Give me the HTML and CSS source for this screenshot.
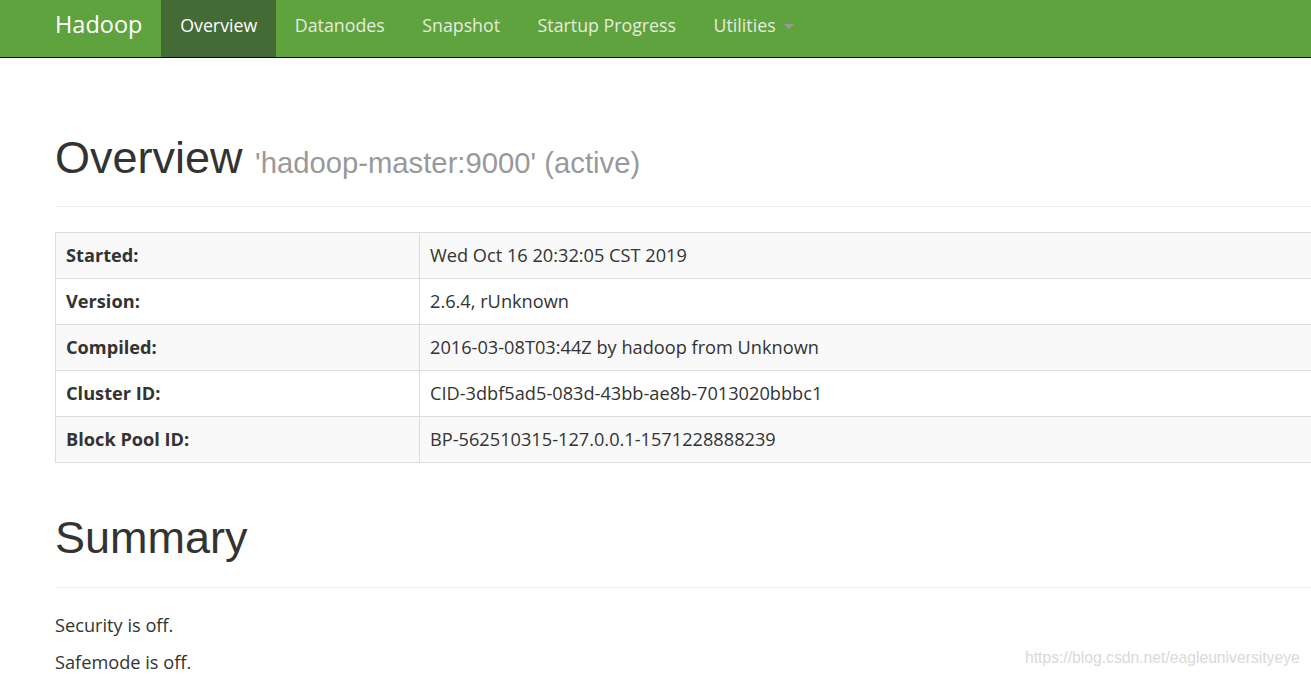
FILE: index.html
```html
<!DOCTYPE html>
<html>
<head>
<meta charset="utf-8">
<title>Namenode information</title>
<link rel="stylesheet" href="styles.css">
</head>
<body>
<header class="navbar">
  <div class="navbar-inner">
    <a class="brand">Hadoop</a>
    <ul class="nav">
      <li class="active"><a>Overview</a></li>
      <li><a>Datanodes</a></li>
      <li><a>Snapshot</a></li>
      <li><a>Startup Progress</a></li>
      <li><a>Utilities <span class="caret"></span></a></li>
    </ul>
  </div>
</header>
<main class="container">
  <div class="page-header">
    <h1>Overview <small>'hadoop-master:9000' (active)</small></h1>
  </div>
  <table class="info">
    <tr class="odd"><th>Started:</th><td>Wed Oct 16 20:32:05 CST 2019</td></tr>
    <tr><th>Version:</th><td>2.6.4, rUnknown</td></tr>
    <tr class="odd"><th>Compiled:</th><td>2016-03-08T03:44Z by hadoop from Unknown</td></tr>
    <tr><th>Cluster ID:</th><td>CID-3dbf5ad5-083d-43bb-ae8b-7013020bbbc1</td></tr>
    <tr class="odd"><th>Block Pool ID:</th><td>BP-562510315-127.0.0.1-1571228888239</td></tr>
  </table>
  <div class="page-header">
    <h1>Summary</h1>
  </div>
  <p>Security is off.</p>
  <p>Safemode is off.</p>
</main>
<div class="watermark">https://blog.csdn.net/eagleuniversityeye</div>
</body>
</html>
```
FILE: styles.css
```css
html, body {
  margin: 0;
  padding: 0;
  overflow: hidden;
  background: #fff;
}
body {
  font-family: "Open Sans", "Noto Sans", sans-serif;
  font-size: 18.2px;
  line-height: 25px;
  color: #333;
  width: 1311px;
  height: 676px;
  position: relative;
}
.navbar {
  background: #5fa33e;
  border-bottom: 1px solid #080808;
  height: 57px;
}
.navbar-inner {
  display: flex;
  align-items: stretch;
  height: 57px;
  padding-left: 36px;
}
.brand {
  display: block;
  color: #fff;
  font-size: 23.5px;
  line-height: 25px;
  padding: 12px 19px 0 19px;
}
.nav {
  display: flex;
  list-style: none;
  margin: 0;
  padding: 0;
}
.nav li a {
  display: block;
  height: 57px;
  box-sizing: border-box;
  padding: 12.5px 18.75px 0 18.75px;
  color: #e6ecde;
  font-size: 17.8px;
  line-height: 25px;
}
.nav li.active a {
  background: #446a35;
  color: #fff;
}
.caret {
  display: inline-block;
  width: 0;
  height: 0;
  margin-left: 4px;
  vertical-align: middle;
  border-top: 5px solid #999;
  border-left: 5px solid transparent;
  border-right: 5px solid transparent;
}
.container {
  padding-left: 55px;
  width: 1500px;
  padding-top: 25px;
}
.page-header {
  margin: 50px 0 25px;
  padding-bottom: 11.25px;
  border-bottom: 1px solid #eee;
}
h1 {
  font-family: "Liberation Sans", Arial, sans-serif;
  font-weight: 500;
  font-size: 45px;
  line-height: 49.5px;
  margin: 0 0 12.5px;
  color: #333;
}
h1 small {
  font-size: 29.25px;
  line-height: 1;
  color: #999;
  font-weight: normal;
}
.info {
  width: 100%;
  border-collapse: collapse;
  border: 1px solid #ddd;
  margin-bottom: 25px;
}
.info th, .info td {
  border: 1px solid #ddd;
  padding: 10px;
  line-height: 25px;
  text-align: left;
  vertical-align: top;
}
.info th {
  width: 343px;
  font-weight: bold;
}
.info tr.odd {
  background: #f9f9f9;
}
p {
  margin: 0 0 12.5px;
}
.watermark {
  position: absolute;
  left: 1025px;
  top: 648px;
  font-family: "Liberation Sans", Arial, sans-serif;
  font-size: 15.7px;
  color: #d9d9d9;
  line-height: 20px;
}
```
